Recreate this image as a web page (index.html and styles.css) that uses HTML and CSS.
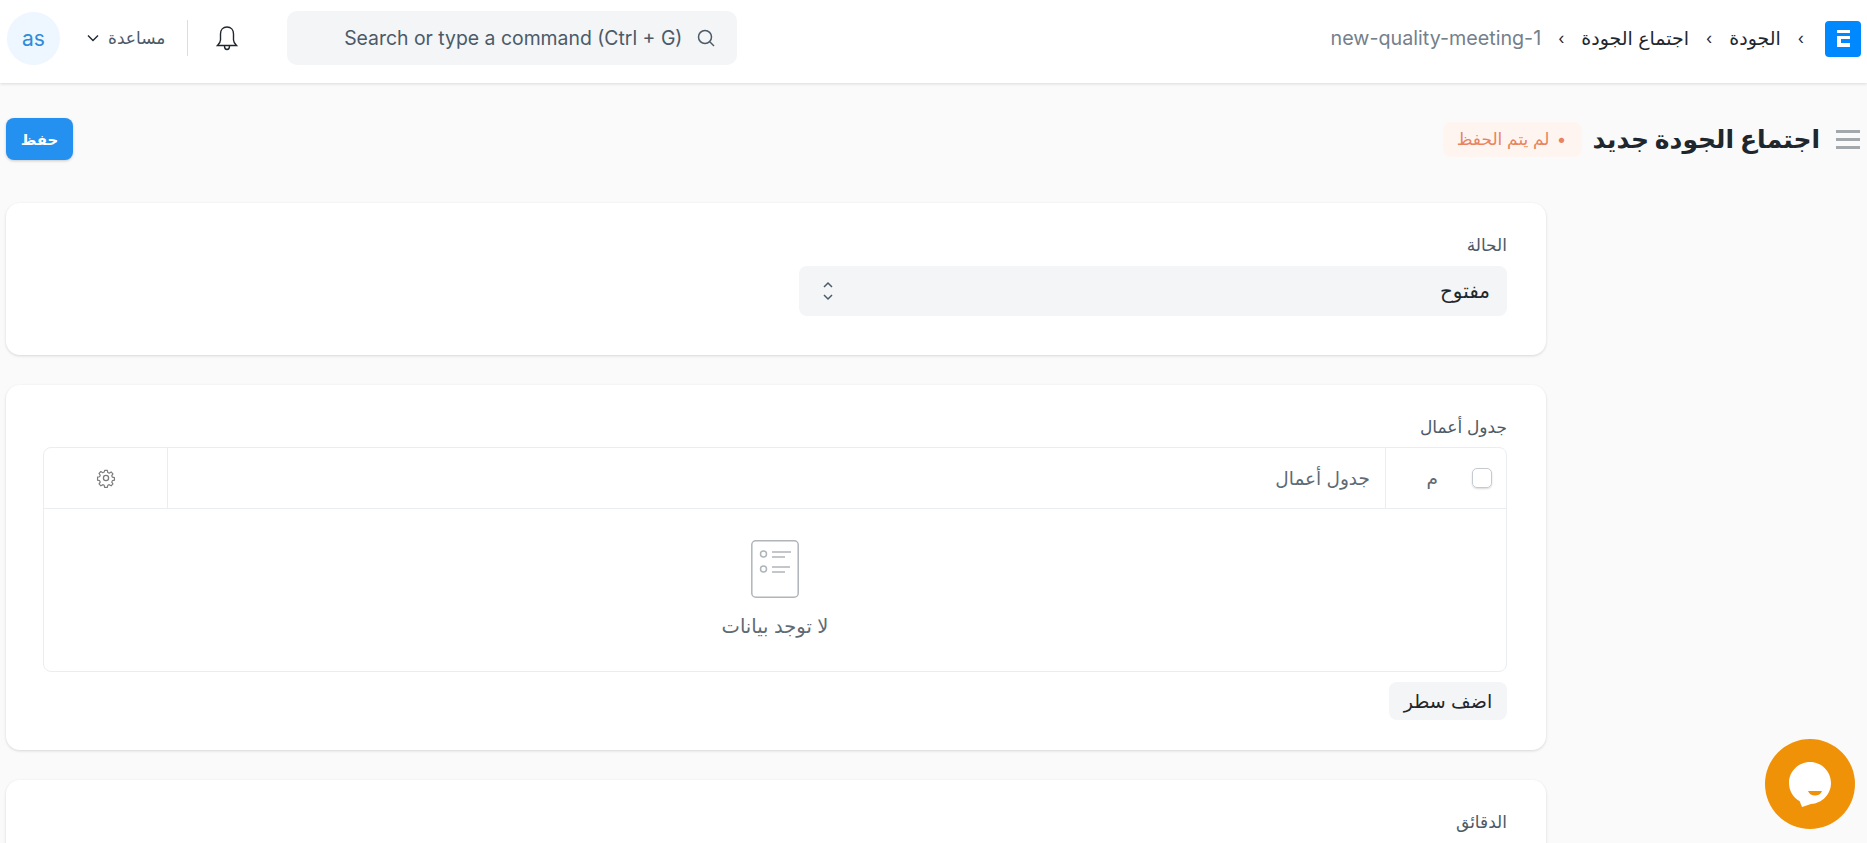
FILE: index.html
```html
<!DOCTYPE html>
<html lang="ar" dir="rtl">
<head>
  <meta charset="UTF-8" />
  <meta name="viewport" content="width=device-width, initial-scale=1.0" />
  <title>اجتماع الجودة جديد</title>
  <link rel="stylesheet" href="styles.css">
</head>
<body>
  <header class="navbar">
    <div class="logo">
      <svg viewBox="0 0 36 36" width="36" height="36"><rect width="36" height="36" rx="4" fill="#0089ff"/><path d="M12 9h13v3H12zM12 15h13v3H16v4h9v4H12z" fill="#fff"/></svg>
    </div>
    <nav class="crumbs">
      <span class="sep">›</span>
      <a>الجودة</a>
      <span class="sep">›</span>
      <a>اجتماع الجودة</a>
      <span class="sep">›</span>
      <a class="current">new-quality-meeting-1</a>
    </nav>
    <div class="nav-end">
      <div class="search">
        <svg class="icon" viewBox="0 0 20 20" width="20" height="20" fill="none" stroke="#4c5a67" stroke-width="1.5"><circle cx="9" cy="9" r="6.5"/><path d="M14 14l4 4"/></svg>
        <span dir="ltr">Search or type a command (Ctrl + G)</span>
      </div>
      <svg class="bell" viewBox="0 0 22 26" width="22" height="26" fill="none" stroke="#1f272e" stroke-width="1.4"><path d="M11 2c-4 0-6.500 3-6.500 7v6c0 2-1.500 4-3 5.500h19c-1.500-1.500-3-3.500-3-5.500V9c0-4-2.500-7-6.500-7z"/><path d="M8.500 21c0 2 1 3.500 2.500 3.500s2.500-1.500 2.500-3.500"/></svg>
      <span class="divider"></span>
      <div class="help">
        <span>مساعدة</span>
        <svg viewBox="0 0 12 8" width="12" height="8" fill="none" stroke="#1f272e" stroke-width="1.4"><path d="M1 1.500l5 5 5-5"/></svg>
      </div>
      <div class="avatar">as</div>
    </div>
  </header>

  <div class="page-head">
    <div class="title-area">
      <span class="burger"><i></i><i></i><i></i></span>
      <h1>اجتماع الجودة جديد</h1>
      <span class="badge"><b>•</b> لم يتم الحفظ</span>
    </div>
    <button class="btn-save">حفظ</button>
  </div>

  <main class="form">
    <section class="card">
      <label class="field-label">الحالة</label>
      <div class="select">
        <span>مفتوح</span>
        <svg viewBox="0 0 10 20" width="10" height="20" fill="none" stroke="#4c5a67" stroke-width="1.5"><path d="M1 6l4-4 4 4M1 14l4 4 4-4"/></svg>
      </div>
    </section>

    <section class="card">
      <label class="field-label">جدول أعمال</label>
      <div class="grid">
        <div class="grid-head">
          <div class="col-check"><span class="checkbox"></span><span class="num">م</span></div>
          <div class="col-main">جدول أعمال</div>
          <div class="col-gear">
            <svg viewBox="0 0 20 20" width="20" height="20" fill="none" stroke="#7c7c7c" stroke-width="1.3" stroke-linejoin="round"><path d="M8.500 1.500h3l.5 2.400 1.600.7 2.100-1.300 2 2.100-1.300 2 .7 1.700 2.300.5v2.800l-2.300.5-.7 1.700 1.300 2-2 2.100-2.100-1.300-1.600.7-.5 2.400h-3l-.5-2.400-1.600-.7-2.100 1.300-2-2.100 1.300-2-.7-1.700-2.300-.5V9.100l2.300-.5.7-1.700-1.300-2 2-2.100 2.100 1.300 1.600-.7z" transform="translate(1 1) scale(.9)"/><circle cx="10" cy="10" r="2.600"/></svg>
          </div>
        </div>
        <div class="grid-empty">
          <svg viewBox="0 0 48 58" width="48" height="58" fill="none" stroke="#b0b5ba" stroke-width="1.500"><rect x=".8" y=".8" width="46.400" height="56.400" rx="4"/><circle cx="12.500" cy="14" r="3"/><circle cx="12.500" cy="29" r="3"/><path d="M21 12h19M21 17h13M21 27h18M21 32h13"/></svg>
          <p>لا توجد بيانات</p>
        </div>
      </div>
      <button class="btn-add">اضف سطر</button>
    </section>

    <section class="card card-cut">
      <label class="field-label">الدقائق</label>
    </section>
  </main>

  <div class="chat">
    <svg viewBox="0 0 42 45" width="42" height="45"><path d="M21 0C9.400 0 0 9.400 0 21c0 7.800 4.300 14.600 10.700 18.200L13 45l9-3c11-.5 20-9.700 20-21C42 9.400 32.600 0 21 0z" fill="#fff"/><path d="M19 29h14c-1 3-4 4.500-7 4.500s-6-1.500-7-4.500z" fill="#ef9208"/></svg>
  </div>
</body>
</html>
```

FILE: styles.css
```css
html, body {
  height: 100%;
  overflow: hidden;
}
body {
  margin: 0;
  background-color: #fafafa;
  color: #1f272e;
  font-family: Inter, "DejaVu Sans", sans-serif;
  font-size: 19px;
}
.navbar {
  display: flex;
  align-items: center;
  height: 83px;
  padding: 0 6px 7px 7px;
  box-sizing: border-box;
  background-color: #fff;
  box-shadow: 0 1px 3px rgba(0, 0, 0, 0.13);
}
.logo {
  display: flex;
  margin-left: 21px;
  margin-top: 2px;
}
.crumbs {
  display: flex;
  align-items: center;
  gap: 17px;
}
.crumbs .sep {
  color: #1f272e;
  font-size: 16px;
}
.crumbs .current {
  color: #74808b;
  font-size: 19.7px;
}
.nav-end {
  display: flex;
  align-items: center;
  margin-right: auto;
}
.search {
  display: flex;
  align-items: center;
  gap: 14px;
  width: 450px;
  height: 54px;
  padding-right: 21px;
  box-sizing: border-box;
  border-radius: 10px;
  background-color: #f3f5f7;
  color: #4c5a67;
  font-size: 19.4px;
}
.bell {
  margin-right: 49px;
}
.divider {
  width: 1px;
  height: 36px;
  margin-right: 28px;
  background-color: #dcdfe2;
}
.help {
  display: flex;
  align-items: center;
  gap: 9px;
  margin-right: 22px;
  font-size: 17px;
  color: #4c5a67;
}
.avatar {
  display: flex;
  align-items: center;
  justify-content: center;
  width: 53px;
  height: 53px;
  margin-right: 27px;
  border-radius: 50%;
  background-color: #eef6ff;
  color: #318ad8;
  font-size: 21px;
}
.page-head {
  display: flex;
  align-items: center;
  justify-content: space-between;
  padding: 35px 7px 43px 6px;
}
.title-area {
  display: flex;
  align-items: center;
}
.burger {
  display: flex;
  flex-direction: column;
  gap: 5px;
  width: 24px;
  margin-left: 16px;
}
.burger i {
  height: 3px;
  background-color: #a3a8ad;
}
h1 {
  margin: 0;
  font-size: 25px;
  font-weight: 700;
}
.badge {
  display: flex;
  align-items: center;
  height: 35px;
  margin-right: 11px;
  padding: 0 16px 0 14px;
  border-radius: 8px;
  background-color: #fff5f0;
  color: #e8835f;
  font-size: 17px;
}
.badge b {
  margin-left: 8px;
}
.btn-save {
  width: 67px;
  height: 42px;
  border: none;
  border-radius: 8px;
  background-color: #2490ef;
  box-shadow: 0 1px 3px rgba(0, 0, 0, 0.2);
  color: #fff;
  font-family: inherit;
  font-size: 15px;
  font-weight: 600;
}
.form {
  display: flex;
  flex-direction: column;
  gap: 30px;
  width: 1540px;
  margin-right: 321px;
}
.card {
  padding: 32px 39px 39px 37px;
  border-radius: 14px;
  background-color: #fff;
  box-shadow: 0 1px 3px rgba(0, 0, 0, 0.14);
}
.card-cut {
  height: 120px;
}
.field-label {
  display: block;
  height: 20px;
  line-height: 20px;
  font-size: 17px;
  color: #4c5a67;
}
.select {
  display: flex;
  align-items: center;
  justify-content: space-between;
  width: 708px;
  height: 50px;
  margin-top: 11px;
  padding: 0 17px 0 24px;
  box-sizing: border-box;
  border-radius: 8px;
  background-color: #f3f5f7;
  font-size: 20px;
}
.grid {
  margin-top: 10px;
  border: 1px solid #ebeef0;
  border-radius: 8px;
}
.grid-head {
  display: flex;
  height: 60px;
  border-bottom: 1px solid #ebeef0;
  color: #5e6a75;
  font-size: 18.5px;
}
.col-check {
  display: flex;
  align-items: center;
  width: 121px;
  padding-right: 14px;
  box-sizing: border-box;
  border-left: 1px solid #ebeef0;
}
.checkbox {
  width: 18px;
  height: 18px;
  border: 1px solid #c5cacf;
  border-radius: 5px;
  box-shadow: 0 1px 2px rgba(0, 0, 0, 0.15);
}
.num {
  margin-right: 34px;
}
.col-main {
  display: flex;
  align-items: center;
  flex: 1;
  padding-right: 15px;
  border-left: 1px solid #ebeef0;
}
.col-gear {
  display: flex;
  align-items: center;
  justify-content: center;
  width: 123px;
}
.grid-empty {
  display: flex;
  flex-direction: column;
  align-items: center;
  height: 162px;
  padding-top: 31px;
  box-sizing: border-box;
  color: #5e6a75;
}
.grid-empty p {
  margin: 16px 0 0;
  font-size: 19.5px;
}
.btn-add {
  display: block;
  width: 118px;
  height: 38px;
  margin-top: 10px;
  border: none;
  border-radius: 8px;
  background-color: #f3f5f7;
  color: #1f272e;
  font-family: inherit;
  font-size: 19px;
}
.card:nth-child(2) {
  padding-bottom: 30px;
}
.chat {
  position: fixed;
  left: 1765px;
  top: 739px;
  display: flex;
  align-items: center;
  justify-content: center;
  width: 90px;
  height: 90px;
  border-radius: 50%;
  background-color: #ef9208;
}
```
